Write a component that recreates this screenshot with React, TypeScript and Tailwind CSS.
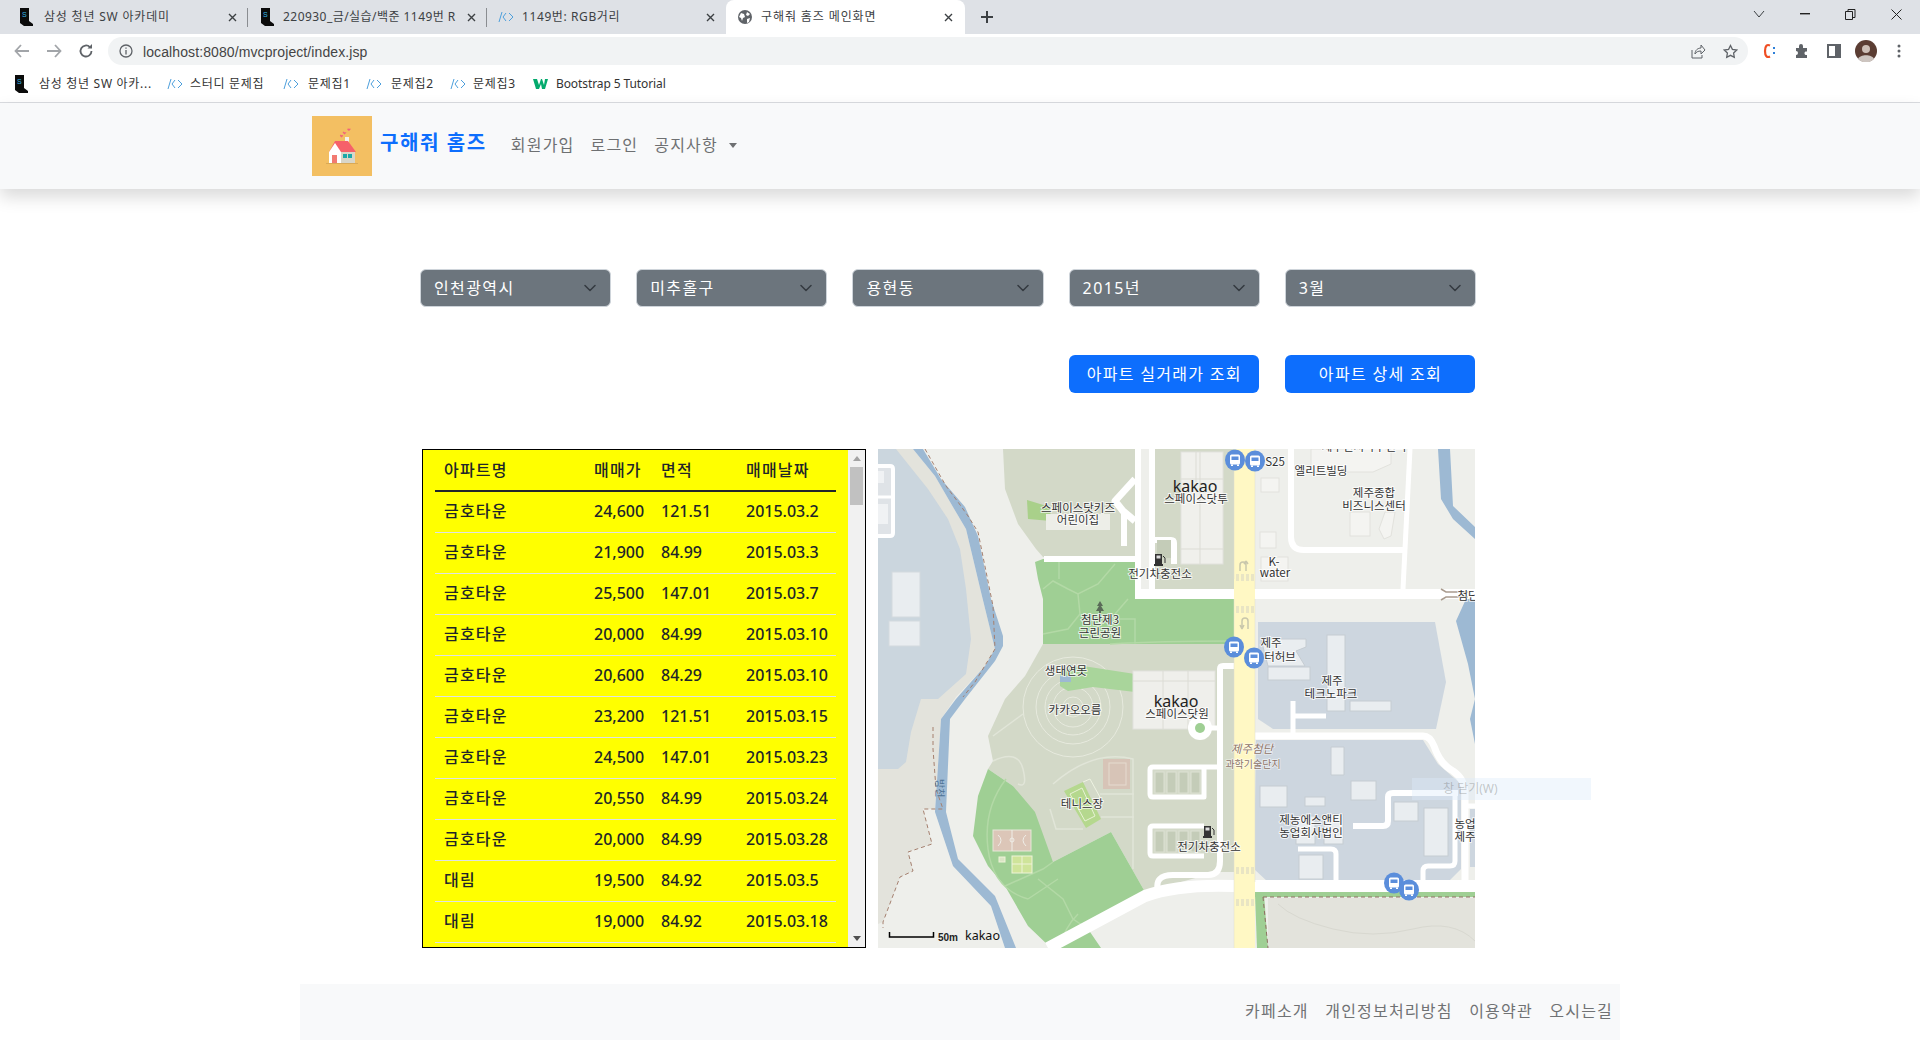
import type { ReactNode } from "react";

const apts = [
  ["금호타운", "24,600", "121.51", "2015.03.2"],
  ["금호타운", "21,900", "84.99", "2015.03.3"],
  ["금호타운", "25,500", "147.01", "2015.03.7"],
  ["금호타운", "20,000", "84.99", "2015.03.10"],
  ["금호타운", "20,600", "84.29", "2015.03.10"],
  ["금호타운", "23,200", "121.51", "2015.03.15"],
  ["금호타운", "24,500", "147.01", "2015.03.23"],
  ["금호타운", "20,550", "84.99", "2015.03.24"],
  ["금호타운", "20,000", "84.99", "2015.03.28"],
  ["대림", "19,500", "84.92", "2015.03.5"],
  ["대림", "19,000", "84.92", "2015.03.18"],
];

const selects = ["인천광역시", "미추홀구", "용현동", "2015년", "3월"];

function SsafyIcon() {
  return (
    <svg width="16" height="18" viewBox="0 0 16 18" className="shrink-0">
      <path d="M2 0h9v13l4 3v2H6l-4-3z" fill="#0b0b0b" />
      <text x="4" y="9" fontSize="7" fill="#35b5e5" fontFamily="Liberation Sans">S</text>
    </svg>
  );
}

function CodeIcon() {
  return (
    <svg width="16" height="12" viewBox="0 0 16 12" className="shrink-0" fill="none" stroke="#4d9fdc" strokeWidth="1">
      <path d="M4 1 1 11M8 2 5 6l3 4M11 2l4 4-4 4" />
    </svg>
  );
}

function Tab({ icon, title, width, sep, textClass = "ml-[8px] tracking-[0.6px]" }: { icon: ReactNode; title: string; width: string; sep?: boolean; textClass?: string }) {
  return (
    <div className={`flex items-center h-[34px] pl-[18px] relative ${width}`}>
      {icon}
      <span className={`text-[12px] text-[#3c4043] whitespace-nowrap overflow-hidden flex-1 ${textClass}`}>{title}</span>
      <svg width="9" height="9" viewBox="0 0 9 9" className="mx-[11px] shrink-0" stroke="#3c4043" strokeWidth="1.4"><path d="M1 1l7 7M8 1 1 8" /></svg>
      {sep && <div className="absolute right-0 top-[8px] h-[19px] w-px bg-[#8a8d91]" />}
    </div>
  );
}

function Bookmark({ icon, label, width, gap = "gap-[7px]", latin }: { icon: ReactNode; label: string; width: string; gap?: string; latin?: boolean }) {
  return (
    <div className={`flex items-center text-[12px] text-[#333] whitespace-nowrap ${gap} ${width}`}>
      {icon}
      <span className={latin ? "tracking-[-0.1px]" : "tracking-[0.7px]"}>{label}</span>
    </div>
  );
}

function BrowserChrome() {
  return (
    <div className="font-['Noto_Sans','Noto_Sans_CJK_KR',sans-serif]">
      {/* tabs */}
      <div className="h-[34px] bg-[#dee1e6] flex">
        <Tab icon={<SsafyIcon />} title="삼성 청년 SW 아카데미" width="w-[248px]" sep textClass="ml-[10px] tracking-[0.8px]" />
        <Tab icon={<SsafyIcon />} title="220930_금/실습/백준 1149번 RG" width="w-[239px] !pl-[11px]" sep textClass="ml-[8px] tracking-[0.45px]" />
        <Tab icon={<CodeIcon />} title="1149번: RGB거리" width="w-[239px] !pl-[11px]" />
        <div className="w-[239px] h-[34px] bg-white rounded-t-lg flex items-center pl-[12px]">
          <svg width="14" height="14" viewBox="0 0 14 14" className="shrink-0"><circle cx="7" cy="7" r="7" fill="#5f6368" /><path d="M3 3l3 1 1 3-2 1-1 3-1-3-2-1zM9 2l3 2-2 2-2-1zM9 9l3-1-1 4-2 1z" fill="#fff" /></svg>
          <span className="ml-[9px] text-[12px] text-[#3c4043] flex-1 tracking-[0.9px]">구해줘 홈즈 메인화면</span>
          <svg width="9" height="9" viewBox="0 0 9 9" className="mr-[12px] shrink-0" stroke="#3c4043" strokeWidth="1.4"><path d="M1 1l7 7M8 1 1 8" /></svg>
        </div>
        <svg width="14" height="14" viewBox="0 0 14 14" className="ml-[15px] mt-[10px]" stroke="#3c4043" strokeWidth="2"><path d="M7 1v12M1 7h12" /></svg>
        <div className="ml-auto flex items-center h-[28px]">
          <svg width="12" height="8" viewBox="0 0 12 8" fill="none" stroke="#3c4043"><path d="M1 1l5 6 5-6" /></svg>
          <svg width="10" height="2" className="ml-[35px]"><rect width="10" height="1.4" fill="#222" /></svg>
          <svg width="11" height="11" viewBox="0 0 11 11" fill="none" stroke="#222" className="ml-[35px]"><path d="M.5 2.5h7v8h-7zM3 2.5v-2h7v8H7.5" /></svg>
          <svg width="11" height="11" viewBox="0 0 11 11" stroke="#222" className="ml-[35px] mr-[18px]"><path d="M.5.5l10 10M10.5.5l-10 10" /></svg>
        </div>
      </div>
      {/* address bar */}
      <div className="h-[34px] bg-white flex items-center">
        <svg width="16" height="14" viewBox="0 0 16 14" fill="none" stroke="#a2a5a9" strokeWidth="1.8" className="ml-[14px]"><path d="M15 7H2M7 1 1.5 7 7 13" /></svg>
        <svg width="16" height="14" viewBox="0 0 16 14" fill="none" stroke="#a2a5a9" strokeWidth="1.8" className="ml-[16px]"><path d="M1 7h13M9 1l5.500 6L9 13" /></svg>
        <svg width="16" height="16" viewBox="0 0 16 16" fill="none" stroke="#5f6368" strokeWidth="1.8" className="ml-[16px]"><path d="M13.500 8a5.500 5.500 0 1 1-1.600-3.900" /><path d="M14 1v4.500H9.500z" fill="#5f6368" stroke="none" /></svg>
        <div className="ml-[14px] w-[1640px] h-[28px] bg-[#f1f3f4] rounded-full flex items-center">
          <svg width="14" height="14" viewBox="0 0 14 14" fill="none" stroke="#5f6368" strokeWidth="1.300" className="ml-[11px]"><circle cx="7" cy="7" r="6" /><path d="M7 6v4.500M7 3.500v1.300" /></svg>
          <span className="ml-[10px] mt-[2px] text-[14px] text-[#444] tracking-[0.1px] font-['Liberation_Sans',sans-serif]">localhost:8080/mvcproject/index.jsp</span>
          <svg width="15" height="15" viewBox="0 0 15 15" fill="none" stroke="#5f6368" className="ml-auto"><path d="M1 6v8h10v-3M4 10c0-4 3-6 6-6V1l4 5-4 4V7c-3 0-5 1-6 3z" /></svg>
          <svg width="15" height="15" viewBox="0 0 15 15" fill="none" stroke="#5f6368" strokeWidth="1.300" className="ml-[17px] mr-[10px]"><path d="M7.500 1.500l1.900 3.900 4.300.6-3.100 3 .7 4.300-3.800-2-3.800 2 .7-4.300-3.100-3 4.300-.6z" /></svg>
        </div>
        <svg width="16" height="16" viewBox="0 0 16 16" fill="none" className="ml-[13px]"><path d="M9 2.500C6 1 4 3 4 8s2 7 5 5.500" stroke="#ef4e23" strokeWidth="2.200" /><path d="M13 4v2M13 9v2" stroke="#2f7fd8" strokeWidth="2" /></svg>
        <svg width="16" height="16" viewBox="0 0 16 16" className="ml-[17px]"><path d="M2 5h3V3a2 2 0 0 1 4 0v2h4v3.500h-1.500a2 2 0 0 0 0 3.500H13v3H2v-3a2 2 0 0 0 0-4z" fill="#5f6368" /></svg>
        <svg width="14" height="14" viewBox="0 0 14 14" fill="none" stroke="#5f6368" strokeWidth="2" className="ml-[17px]"><rect x="1" y="1" width="12" height="12" /><rect x="9" y="1" width="4" height="12" fill="#5f6368" /></svg>
        <svg width="22" height="22" viewBox="0 0 22 22" className="ml-[14px]"><circle cx="11" cy="11" r="11" fill="#5b3d33" /><circle cx="11" cy="9" r="4" fill="#cdbfb7" /><path d="M3 19c2-5 14-5 16 0a11 11 0 0 1-16 0z" fill="#cdc5c0" /></svg>
        <svg width="4" height="14" viewBox="0 0 4 14" className="ml-[20px]" fill="#5f6368"><circle cx="2" cy="2" r="1.500" /><circle cx="2" cy="7" r="1.500" /><circle cx="2" cy="12" r="1.500" /></svg>
      </div>
      {/* bookmarks */}
      <div className="h-[35px] bg-white flex items-center border-b border-[#dadce0] pl-[13px] pb-[2px]">
        <Bookmark icon={<SsafyIcon />} label="삼성 청년 SW 아카..." width="w-[154px]" gap="gap-[10px]" />
        <Bookmark icon={<CodeIcon />} label="스터디 문제집" width="w-[116px]" />
        <Bookmark icon={<CodeIcon />} label="문제집1" width="w-[83px]" gap="gap-[9px]" />
        <Bookmark icon={<CodeIcon />} label="문제집2" width="w-[84px]" gap="gap-[9px]" />
        <Bookmark icon={<CodeIcon />} label="문제집3" width="w-[83px]" />
        <Bookmark
          icon={
            <svg width="16" height="12" viewBox="0 0 16 12" className="shrink-0"><path d="M0 1h4l2 6 2-6h1l2 6 1-6h3l-3 10h-3L8 6l-2 5H3z" fill="#04aa6d" /></svg>
          }
          label="Bootstrap 5 Tutorial"
          width="w-[160px]"
          latin
        />
      </div>
    </div>
  );
}

function HouseLogo() {
  return (
    <div className="w-[60px] h-[60px] bg-[#f3bf62] shrink-0 flex items-center justify-center">
      <svg width="32" height="36" viewBox="0 0 32 36">
        <path d="M19 5c-1-2-3-1-2 0l1.500 1.500L20 5c1-1-.5-1.500-1 0zM23 1c-1-1-2 0-1.500 1l1.500 1 1.500-1.500c.5-1-1-1.500-1.500-.5zM16 7.500c-1-1.500-2.500-.5-2 .5l1.500 1.500L17 8c.5-1-.5-1.500-1-.5z" fill="#f2637a" />
        <rect x="19" y="9" width="4" height="8" fill="#f5f0ea" />
        <path d="M3 24 9 13h13l8 11z" fill="#f6616a" />
        <path d="M14 24h15v11H14z" fill="#d9d6c8" />
        <path d="M3 24 9 15l6 9v11H3z" fill="#fff" />
        <rect x="6" y="27" width="5" height="8" fill="#f27a72" />
        <rect x="17" y="26" width="4" height="4" fill="#1ba9a9" />
        <rect x="22" y="26" width="4" height="4" fill="#1ba9a9" />
        <rect x="0" y="35" width="32" height="1" fill="#d9a956" />
      </svg>
    </div>
  );
}

function Navbar() {
  return (
    <nav className="relative z-10 h-[86px] bg-[#f8f9fa] shadow-[0_8px_16px_rgba(0,0,0,0.15)] flex items-center pl-[312px] font-['Noto_Sans','Noto_Sans_CJK_KR',sans-serif]">
      <HouseLogo />
      <span className="ml-[8px] text-[20px] font-bold text-[#0d6efd] tracking-[1.6px] -mt-[6px]">구해줘 홈즈</span>
      <div className="flex items-center text-[16px] text-[#6e7072] tracking-[1.2px] ml-[24px] -mt-[2px]">
        <span>회원가입</span>
        <span className="ml-[16px]">로그인</span>
        <span className="ml-[16px]">공지사항</span>
        <span className="ml-[11px] border-t-[5px] border-x-[4.800px] border-b-0 border-t-[#6e7072] border-x-transparent" />
      </div>
    </nav>
  );
}

function SearchBar() {
  return (
    <div className="w-[1056px] ml-[420px] mt-[80px] font-['Noto_Sans','Noto_Sans_CJK_KR',sans-serif]">
      <div className="grid grid-cols-5 gap-[25px]">
        {selects.map((s) => (
          <div key={s} className="h-[38px] bg-[#6c757d] border border-[#ced4da] rounded-[6px] pl-[13px] pr-[14px] flex items-center justify-between text-white text-[16px] tracking-[1.400px]">
            <span>{s}</span>
            <svg width="12" height="8" viewBox="0 0 12 8" fill="none" stroke="#343a40" strokeWidth="1.500" strokeLinecap="round" strokeLinejoin="round"><path d="M1 1.500l5 5 5-5" /></svg>
          </div>
        ))}
      </div>
      <div className="grid grid-cols-5 gap-[25px] mt-[48px]">
        <button className="col-start-4 h-[38px] mx-[0.5px] bg-[#0d6efd] text-white text-[16px] rounded-[6px] tracking-[1.300px]">아파트 실거래가 조회</button>
        <button className="h-[38px] mx-[0.5px] bg-[#0d6efd] text-white text-[16px] rounded-[6px] tracking-[1.300px]">아파트 상세 조회</button>
      </div>
    </div>
  );
}

function AptTable() {
  return (
    <div className="w-[444px] h-[499px] border border-black flex overflow-hidden shrink-0 font-['Noto_Sans','Noto_Sans_CJK_KR',sans-serif] text-[16px] text-[#212529]">
      <div className="w-[425px] bg-[#ffff00] pl-[12px] overflow-hidden">
        <table className="w-[401px] table-fixed border-collapse">
          <colgroup>
            <col className="w-[159px]" />
            <col className="w-[67px]" />
            <col className="w-[85px]" />
            <col />
          </colgroup>
          <thead>
            <tr className="h-[41px] border-b-2 border-[#212529]">
              <th className="pl-[9px] text-left font-medium tracking-[1.200px]">아파트명</th>
              <th className="text-left font-medium tracking-[1.200px]">매매가</th>
              <th className="text-left font-medium tracking-[1.200px]">면적</th>
              <th className="text-left font-medium tracking-[1.200px]">매매날짜</th>
            </tr>
          </thead>
          <tbody>
            {apts.map((a, i) => (
              <tr key={i} className="h-[41px] border-b border-[#dee2e6]">
                <td className="pl-[9px] pb-[1px] tracking-[1.200px] font-medium">{a[0]}</td>
                <td className="pb-[1px] font-medium">{a[1]}</td>
                <td className="pb-[1px] font-medium">{a[2]}</td>
                <td className="pb-[1px] font-medium">{a[3]}</td>
              </tr>
            ))}
          </tbody>
        </table>
      </div>
      {/* scrollbar */}
      <div className="flex-1 bg-[#f1f1f1] flex flex-col items-center">
        <div className="mt-[6px] border-b-[5px] border-x-[4px] border-t-0 border-b-[#a3a3a3] border-x-transparent" />
        <div className="mt-[6px] w-[13px] h-[38px] bg-[#c1c1c1]" />
        <div className="mt-auto mb-[6px] border-t-[5px] border-x-[4px] border-b-0 border-t-[#505050] border-x-transparent" />
      </div>
    </div>
  );
}

type Lbl = [string, number, number];

const labels: Lbl[] = [
  ["스페이스닷키즈", 200, 63], ["어린이집", 200, 75], ["전기차충전소", 282, 129], ["첨단제3", 222, 175], ["근린공원", 222, 188],
  ["생태연못", 188, 226], ["카카오오름", 197, 265], ["테니스장", 204, 359], ["스페이스닷투", 318, 54], ["스페이스닷원", 299, 269],
  ["S25", 397, 17], ["엘리트빌딩", 443, 26], ["제주종합", 496, 48], ["비즈니스센터", 496, 61], ["K-", 396, 117], ["water", 397, 128],
  ["첨단", 590, 151], ["제주", 393, 198], ["터허브", 402, 212], ["제주", 454, 236], ["테크노파크", 453, 249],
  ["제농에스앤티", 433, 375], ["농업회사법인", 433, 388], ["농업", 587, 379], ["제주", 587, 392], ["전기차충전소", 331, 402],
  ["제주벤처마루센터", 486, 2],
];

const buses: [number, number][] = [[357, 11], [377, 12], [356, 198], [376, 209], [516, 434], [531, 441]];

function Bus({ x, y }: { x: number; y: number }) {
  return (
    <g transform={`translate(${x} ${y})`}>
      <ellipse rx="10" ry="10.500" fill="#5b8edb" />
      <rect x="-5" y="-5.500" width="10" height="10" rx="1.500" fill="#fff" />
      <rect x="-3.500" y="-3.500" width="7" height="3.500" fill="#5b8edb" />
      <rect x="-4" y="4.500" width="2" height="1.500" fill="#fff" />
      <rect x="2" y="4.500" width="2" height="1.500" fill="#fff" />
    </g>
  );
}

function Charger({ x, y }: { x: number; y: number }) {
  return (
    <g transform={`translate(${x - 5} ${y - 6})`} fill="#333">
      <rect x="0" y="0" width="7" height="11" />
      <rect x="1.500" y="1.500" width="4" height="3" fill="#ddd" />
      <rect x="-1" y="10" width="9" height="2" />
      <path d="M8 2l2 2v5" stroke="#333" fill="none" />
    </g>
  );
}

function Stalls({ x, y }: { x: number; y: number }) {
  return (
    <g>
      {[0, 1, 2, 3].map((i) => (
        <rect key={i} x={x + i * 12} y={y} width="9" height="21" fill="#c4ccb8" stroke="#dde1d3" strokeWidth="1" />
      ))}
    </g>
  );
}

function JejuMap() {
  return (
    <svg viewBox="0 0 597 499" width="597" height="499" className="block" fontFamily="'Noto Sans CJK KR', sans-serif">
      <rect width="597" height="499" fill="#eeefeb" />
      {/* left side: dark land, lake and river */}
      <path d="M18 0H35L57 27 75 58 88 80 103 143 117 200 107 217 78 248 63 270 57 360H45L54 395 30 403 35 422 22 428 5 473 0 475V0z" fill="#e3e3dc" />
      <path d="M0 0H18L50 40 70 70 82 100 88 140 93 190 88 225 60 250 43 250 33 283 28 313 20 320H0z" fill="#cbd6de" />
      <path d="M35 0 57 27 75 58 88 80 103 143 117 200 107 217 78 250 63 270 57 363 75 417 113 457 127 499H138L117 447 80 410 68 363 72 270 87 250 117 212 125 197V187L113 150 100 87 87 58 63 30 45 0z" fill="#9db9d3" />
      <path d="M47 0 68 37 80 53 90 67 100 83 115 157 117 200 97 233 85 248M55 278V300L58 340 65 360H45L54 395 30 403 35 422 22 428 5 473V479" fill="none" stroke="#a5806f" strokeWidth="1" strokeDasharray="4 3" />
      <rect x="14" y="123" width="28" height="45" fill="#e9edf0" stroke="#d3d9de" />
      <rect x="11" y="172" width="31" height="25" fill="#e9edf0" stroke="#d3d9de" />
      <path d="M0 17H12Q15 17 15 20V84Q15 87 12 87H0" fill="#dfe3e7" stroke="#fff" strokeWidth="4" />
      <path d="M0 48H16" stroke="#fff" strokeWidth="3" />
      <path d="M0 22h6v12H0zM0 55h10v20H0z" fill="#f0f2f4" />

      {/* right rivers */}
      <path d="M560 0 563 50 575 70 597 90V78L575 57 572 0z" fill="#9db9d3" />
      <path d="M597 140 588 150 578 172 590 215 597 250 592 270 597 295V160L590 172 597 190z" fill="#9db9d3" />

      {/* green-grey zones */}
      <path d="M125 0 127 40 140 75 158 100 165 108H257V0zM277 0H356V140H277z" fill="#d3d9c8" />
      <path d="M165 195 147 227 127 250 110 287 115 312 110 320 135 337 175 413 233 383 267 443 339 423 356 423V195z" fill="#d3d9c8" />
      <path d="M157 113 165 110H257V150H356V195H165V150L160 130z" fill="#9fcf94" />
      <path d="M110 320 100 347 95 387 110 417 127 437 150 477 173 499H223L210 480 267 443 233 383 175 413 157 363 135 337z" fill="#9fcf94" />
      <path d="M165 140 175 132 190 140 200 145 220 135 237 115M200 145 202 165 190 180 165 185M181 113V130M237 165 250 150M232 170H257V195M232 195Q280 192 356 192M128 330Q105 360 110 400T150 450M127 437 165 420 175 413M160 430 185 450 195 470 210 480M150 450 180 430M183 498Q185 480 200 465" fill="none" stroke="#b3d9a6" strokeWidth="1.500" />

      {/* oreum rings and park paths */}
      {[10, 20, 28, 37, 50].map((r) => (
        <circle key={r} cx="195" cy="258" r={r} fill="none" stroke="#e7eade" strokeWidth="1" />
      ))}
      <path d="M115 287 145 265M115 312Q140 300 145 320T140 335M175 335Q215 300 255 310V420M172 360 178 380 205 380M222 345H256M223 368H256" fill="none" stroke="#e1e5d8" strokeWidth="1.500" />

      {/* top-left park features */}
      <path d="M149 51 172 58 173 72 150 70z" fill="#a9d08a" />
      <rect x="168" y="65" width="64" height="16" fill="#edeee8" />
      <path d="M182 222 205 217 257 225V243L215 238 190 242 182 237z" fill="#a9d59b" />
      <rect x="182" y="227" width="11" height="6" fill="#9db9d3" />

      {/* courts */}
      <rect x="225" y="310" width="27" height="30" fill="#d7c4b7" />
      <rect x="231" y="314" width="17" height="22" fill="none" stroke="#e6dbd0" />
      <path d="M186 342 205 333 223 370 208 379z" fill="#b5d88e" />
      <path d="M192 345 204 339 217 367 207 372z" fill="none" stroke="#e8f2d5" />
      <path d="M205 333 212 330 223 350" fill="none" stroke="#eef3e2" />
      <rect x="115" y="381" width="38" height="21" fill="#dcc6b8" stroke="#e6e8d8" />
      <path d="M134 381v21M120 386q6 5 0 11M148 386q-6 5 0 11" fill="none" stroke="#f0eee8" />
      <circle cx="134" cy="391" r="2" fill="none" stroke="#f0eee8" />
      <rect x="134" y="407" width="20" height="17" fill="#cfe49a" stroke="#eef3d8" />
      <path d="M144 407v17M134 415h20" stroke="#eef3d8" />
      <rect x="121" y="408" width="6" height="5" fill="#dbe5c6" stroke="#eef3d8" />

      {/* main blocks */}
      <path d="M380 173H557L568 233 558 280H395L380 270z" fill="#cdd6df" />
      <path d="M378 291H545L560 315 583 335V420L570 433H390L376 420z" fill="#cdd6df" />
      <rect x="592" y="360" width="5" height="58" fill="#cdd6df" />

      {/* land darker lower right */}
      <rect x="390" y="449" width="207" height="50" fill="#e3e3dc" />
      <rect x="377" y="442" width="220" height="6" fill="#9fcf94" />
      <path d="M377 445H386L390 499H379z" fill="#9fcf94" />
      <path d="M385 448H597M385 448 390 499" fill="none" stroke="#8f6f62" strokeDasharray="4 3" />
      <path d="M400 455Q415 470 455 480T535 480 597 492" fill="none" stroke="#d8d8d0" />

      {/* buildings */}
      <g fill="#f4f4f1" stroke="#e2e2dd">
        <rect x="383" y="29" width="18" height="14" />
        <rect x="382" y="83" width="16" height="16" />
        <rect x="383" y="108" width="27" height="24" />
        <path d="M433 0H513V15L495 23H433z" />
        <rect x="472" y="63" width="20" height="24" />
        <path d="M507 63H517L513 87 506 90 501 80z" />
        <rect x="303" y="3" width="42" height="112" fill="#f0f0ec" />
        <rect x="255" y="222" width="82" height="58" fill="#efefeb" />
      </g>
      <g fill="none" stroke="#dcdcd5">
        <path d="M322 3v112M318 3v30M303 100h42M303 30h42" />
        <path d="M285 222v58M310 222v58M255 232h82" />
      </g>
      <g fill="#e9edf0" stroke="#c5ccd2">
        <path d="M383 190H428V198L418 202 427 217H390z" />
        <rect x="390" y="218" width="42" height="13" />
        <rect x="449" y="186" width="18" height="76" />
        <rect x="472" y="252" width="41" height="10" />
        <path d="M453 298H466V326H453z" />
        <rect x="382" y="337" width="27" height="21" />
        <rect x="427" y="348" width="20" height="9" />
        <rect x="473" y="332" width="25" height="19" />
        <rect x="516" y="353" width="24" height="19" />
        <rect x="546" y="359" width="24" height="48" />
        <rect x="421" y="406" width="24" height="24" />
        <rect x="418" y="367" width="19" height="28" />
        <rect x="446" y="365" width="19" height="30" />
      </g>

      {/* roads */}
      <g fill="none" stroke="#fff" strokeLinejoin="round">
        <path d="M166 110H257" strokeWidth="6" />
        <path d="M260 0V150M274 0V150" strokeWidth="6" />
        <path d="M257 145H597" strokeWidth="10" />
        <path d="M257 30 237 52 245 62 257 72" strokeWidth="7" />
        <path d="M246 62V97" strokeWidth="6" />
        <path d="M277 91H293Q296 91 296 94V115" strokeWidth="6" />
        <path d="M413 0V88Q413 101 426 101H527" strokeWidth="6" />
        <path d="M532 0 525 140" strokeWidth="5" />
        <path d="M356 217H345Q342 217 342 220V412Q342 426 330 426H295Q276 426 280 442" strokeWidth="6" />
        <path d="M322 279H340" strokeWidth="5" />
        <path d="M170 499 267 447Q300 435 356 437H597" strokeWidth="12" />
        <path d="M376 287H545Q552 287 556 297 562 315 575 322 587 330 587 345V437" strokeWidth="7" />
        <path d="M415 252V285M415 267H448" strokeWidth="5" />
        <path d="M475 377H505Q510 377 510 372V348Q510 344 515 344H580" strokeWidth="6" />
        <path d="M577 344V412Q577 417 572 417H550Q545 417 545 422V436" strokeWidth="5" />
        <path d="M420 400H453Q458 400 458 405V435" strokeWidth="5" />
        <path d="M590 357H597" strokeWidth="5" />
        <path d="M341 318H275Q272 318 272 321V345Q272 348 275 348H326V318" strokeWidth="5" />
        <path d="M326 377H275Q272 377 272 380V404Q272 407 275 407H326" strokeWidth="5" />
      </g>
      <Stalls x={277} y={323} />
      <Stalls x={277} y={382} />
      <rect x="279" y="91" width="14" height="18" fill="#c4ccb8" />
      <circle cx="322" cy="279" r="12" fill="#fff" />
      <circle cx="322" cy="279" r="5" fill="#9fcf94" />

      {/* yellow main road */}
      <rect x="356" y="0" width="21" height="499" fill="#fff8c4" />
      <path d="M356 0V130M377 0V140M356 150V499M377 150V433" stroke="#dcdcd0" strokeWidth="0.500" />
      <g fill="#e9e5c4">
        {[0, 1, 2, 3].map((i) => (
          <g key={i}>
            <rect x={358 + i * 5} y="125" width="3" height="7" />
            <rect x={358 + i * 5} y="157" width="3" height="7" />
            <rect x={358 + i * 5} y="418" width="3" height="7" />
            <rect x={358 + i * 5} y="450" width="3" height="7" />
          </g>
        ))}
      </g>
      <path d="M362 122V116Q362 113 365 113T368 116V122M368 112 366 115M368 112 370 115" fill="none" stroke="#c9c7ac" strokeWidth="1.500" />
      <path d="M370 180V172Q370 169 367 169T364 172V178M364 180 362 176M364 180 366 176" fill="none" stroke="#c9c7ac" strokeWidth="1.500" />

      {/* right side bridge marks */}
      <path d="M563 140 568 143H590M563 151 568 148H590" fill="none" stroke="#a99b8e" strokeWidth="1.500" />

      {/* tree and icons */}
      <path d="M222 152l3 5h-2l3 5h-3v3h-2v-3h-3l3-5h-2z" fill="#5a6b58" />
      <Charger x={282} y={111} />
      <Charger x={331} y={383} />

      {labels.map(([t, x, y], i) => (
        <text key={i} x={x} y={y} textAnchor="middle" fontSize="11.500" fill="#333" stroke="#fff" strokeWidth="2" paintOrder="stroke" strokeOpacity="0.750">{t}</text>
      ))}
      <text x="317" y="43" textAnchor="middle" fontSize="16" fontFamily="'Noto Sans', sans-serif" fill="#222">kakao</text>
      <text x="298" y="258" textAnchor="middle" fontSize="16" fontFamily="'Noto Sans', sans-serif" fill="#222">kakao</text>
      <text x="374" y="304" textAnchor="middle" fontSize="11.500" fontStyle="italic" fill="#8e7468" stroke="#fff" strokeWidth="1.500" paintOrder="stroke" strokeOpacity="0.600">제주첨단</text>
      <text x="375" y="319" textAnchor="middle" fontSize="10" fill="#8e7468" stroke="#fff" strokeWidth="1.500" paintOrder="stroke" strokeOpacity="0.600">과학기술단지</text>
      <text x="0" y="0" transform="translate(58 330) rotate(90)" fontSize="10" fill="#4f7496">방천</text>

      {buses.map(([x, y], i) => (
        <Bus key={i} x={x} y={y} />
      ))}

      {/* scale */}
      <path d="M11.500 483V488H55.500V483" fill="none" stroke="#000" strokeWidth="1.500" />
      <text x="60" y="492" fontSize="10" fontWeight="700" fill="#222" fontFamily="'Liberation Sans', sans-serif">50m</text>
      <text x="87" y="491" fontSize="12.500" fontFamily="'Noto Sans', sans-serif" fill="#111">kakao</text>
    </svg>
  );
}

function Footer() {
  const links = ["카페소개", "개인정보처리방침", "이용약관", "오시는길"];
  return (
    <footer className="mt-[36px] ml-[300px] w-[1320px] h-[56px] pb-[2px] bg-[#f8f9fa] flex items-center justify-end pr-[7px] gap-[16.500px] text-[16px] text-[#707274] tracking-[1.200px] font-['Noto_Sans','Noto_Sans_CJK_KR',sans-serif]">
      {links.map((l) => (
        <span key={l}>{l}</span>
      ))}
    </footer>
  );
}

export default function App() {
  return (
    <div className="w-[1920px] h-[1040px] overflow-hidden bg-white">
      <BrowserChrome />
      <Navbar />
      <SearchBar />

      <div className="flex gap-[12px] ml-[422px] mt-[56px]">
        <AptTable />
        <div className="relative w-[597px] h-[499px]">
          <JejuMap />
          {/* ghost tooltip left over the map */}
          <div className="absolute left-[534px] top-[329px] w-[179px] h-[22px] bg-[#dcebfa]/40 text-[12px] text-[#777]/40 pl-[31px] leading-[22px] font-['Noto_Sans','Noto_Sans_CJK_KR',sans-serif]">창 닫기(W)</div>
        </div>
      </div>

      <Footer />
    </div>
  );
}
